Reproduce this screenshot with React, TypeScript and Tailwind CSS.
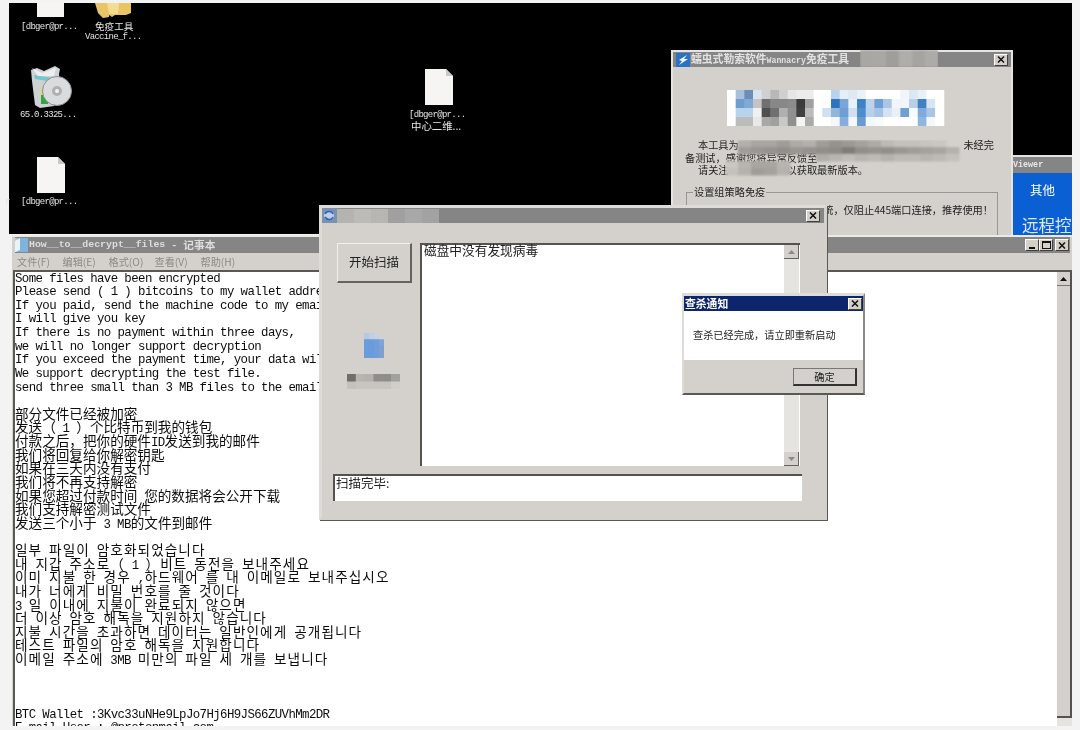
import React from "react";

const MONO = "font-['Liberation_Mono',monospace] text-[12.4px] tracking-[-0.6px]";
const SC = "font-['Noto_Sans_CJK_SC','Liberation_Sans',sans-serif] text-[13.6px]";
const KR = "font-['Noto_Sans_CJK_KR','Liberation_Sans',sans-serif] text-[13.6px] tracking-[1.1px]";

const LINES: { t: string; kr?: boolean }[] = [
  { t: "Some files have been encrypted" },
  { t: "Please send ( 1 ) bitcoins to my wallet address" },
  { t: "If you paid, send the machine code to my email" },
  { t: "I will give you key" },
  { t: "If there is no payment within three days," },
  { t: "we will no longer support decryption" },
  { t: "If you exceed the payment time, your data will be open to the public download" },
  { t: "We support decrypting the test file." },
  { t: "send three small than 3 MB files to the email address" },
  { t: "" },
  { t: "部分文件已经被加密" },
  { t: "发送（ 1 ）个比特币到我的钱包" },
  { t: "付款之后，把你的硬件ID发送到我的邮件" },
  { t: "我们将回复给你解密钥匙" },
  { t: "如果在三天内没有支付" },
  { t: "我们将不再支持解密" },
  { t: "如果您超过付款时间 您的数据将会公开下载" },
  { t: "我们支持解密测试文件" },
  { t: "发送三个小于 3 MB的文件到邮件" },
  { t: "" },
  { t: "일부 파일이 암호화되었습니다", kr: true },
  { t: "내 지갑 주소로（ 1 ）비트 동전을 보내주세요", kr: true },
  { t: "이미 지불 한 경우 ,하드웨어 를 내 이메일로 보내주십시오", kr: true },
  { t: "내가 너에게 비밀 번호를 줄 것이다", kr: true },
  { t: "3 일 이내에 지불이 완료되지 않으면", kr: true },
  { t: "더 이상 암호 해독을 지원하지 않습니다", kr: true },
  { t: "지불 시간을 초과하면 데이터는 일반인에게 공개됩니다", kr: true },
  { t: "테스트 파일의 암호 해독을 지원합니다", kr: true },
  { t: "이메일 주소에 3MB 미만의 파일 세 개를 보냅니다", kr: true },
  { t: "" },
  { t: "" },
  { t: "" },
  { t: "BTC Wallet :3Kvc33uNHe9LpJo7Hj6H9JS66ZUVhMm2DR" },
  { t: "E-mail User : @protonmail.com" },
];

function Line({ t, kr }: { t: string; kr?: boolean }) {
  const parts = t.split(/([\x00-\x7f]+)/).filter(Boolean);
  const cjk = /[^\x00-\x7f]/.test(t);
  return (
    <div className={`h-[13.625px] leading-[13.625px] whitespace-pre font-['Liberation_Mono',monospace] text-[11px] ${cjk ? "-translate-y-[2px]" : ""}`}>
      {parts.map((p, i) => (
        <span key={i} className={/^[\x00-\x7f]/.test(p) ? MONO : kr ? KR : SC}>
          {p}
        </span>
      ))}
    </div>
  );
}

function Mosaic({
  w,
  h,
  cw,
  ch,
  rows,
  blur = 0.7,
  id,
}: {
  w: number;
  h: number;
  cw: number;
  ch: number;
  rows: string[][];
  blur?: number;
  id: string;
}) {
  return (
    <svg width={w} height={h} className="block">
      <filter id={id} x="-10%" y="-10%" width="120%" height="120%">
        <feGaussianBlur stdDeviation={blur} />
      </filter>
      <g filter={`url(#${id})`}>
        {rows.map((r, y) =>
          r.map((c, x) =>
            c ? <rect key={`${x}-${y}`} x={x * cw} y={y * ch} width={cw + 0.5} height={ch + 0.5} fill={`#${c}`} /> : null
          )
        )}
      </g>
    </svg>
  );
}

function XBtn() {
  return (
    <div className="w-[14px] h-[12px] bg-[#d4d0c8] border-t border-l border-t-white border-l-white border-b border-r border-b-[#404040] border-r-[#404040] flex items-center justify-center">
      <svg width="8" height="7" viewBox="0 0 8 7">
        <path d="M1 0.5L7 6.5M7 0.5L1 6.5" stroke="#111" strokeWidth="1.5" />
      </svg>
    </div>
  );
}

function MinBtn() {
  return (
    <div className="w-[14px] h-[12px] bg-[#d4d0c8] border-t border-l border-t-white border-l-white border-b border-r border-b-[#404040] border-r-[#404040] flex items-end justify-center pb-[1px]">
      <div className="w-[6px] h-[2px] bg-[#111] mr-[1px]" />
    </div>
  );
}

function MaxBtn() {
  return (
    <div className="w-[14px] h-[12px] bg-[#d4d0c8] border-t border-l border-t-white border-l-white border-b border-r border-b-[#404040] border-r-[#404040] flex items-center justify-center">
      <div className="w-[9px] h-[8px] border border-t-2 border-[#111]" />
    </div>
  );
}

function DocIcon() {
  return (
    <svg width="28" height="36" viewBox="0 0 28 36">
      <path d="M0 0H21L28 7V36H0Z" fill="#f7f5f3" />
      <path d="M21 0L28 7H21Z" fill="#c8c8c8" />
    </svg>
  );
}

function DeskLabel({ children, className }: { children: React.ReactNode; className: string }) {
  return (
    <div className={`absolute text-[#e4e4e4] whitespace-pre leading-[10px] font-['Liberation_Mono','Noto_Sans_CJK_SC',monospace] text-[9px] tracking-[-0.7px] ${className}`}>
      {children}
    </div>
  );
}

const UI = "font-['Noto_Sans_CJK_SC','Liberation_Sans',sans-serif]";

export default function App() {
  return (
    <div className={`relative w-[1080px] h-[730px] overflow-hidden bg-[#f3f3f3] blur-[0.35px] ${UI}`}>
      {/* desktop */}
      <div className="absolute left-[9px] top-[3px] w-[1063px] h-[231px] bg-black overflow-hidden" />

      <div className="absolute left-[37px] top-[3px] w-[27px] h-[14px] bg-[#f7f5f3]" />
      <DeskLabel className="left-[21px] top-[22px]">[dbger@pr...</DeskLabel>

      <svg className="absolute left-[95px] top-[3px]" width="36" height="15" viewBox="0 0 36 15">
        <path d="M0 0H36V10L31 12H20L17 14L14 12V14L8 15L3 10Z" fill="#e9c568" />
        <path d="M12 0H24L23 11H14Z" fill="#f5dc93" />
      </svg>
      <div className="absolute left-[95px] top-[19px] text-[9.6px] leading-[14px] text-[#e8e8e8] whitespace-pre">免疫工具</div>
      <DeskLabel className="left-[85px] top-[32px]">Vaccine_f...</DeskLabel>

      <svg className="absolute left-[30px] top-[65px]" width="42" height="44" viewBox="0 0 42 44">
        <path d="M1 5L7 3L14 6L25 1L30 4L29 9L30 30L24 41L10 43L5 40L2 16Z" fill="#cfd2d5" />
        <path d="M4 10L29 14L29 18L5 14Z" fill="#6fc8d2" />
        <path d="M2 3L12 8L26 3L24 11L8 11Z" fill="#eeeeee" />
        <rect x="11" y="24" width="8" height="8" fill="#e5d84a" />
        <rect x="11" y="30" width="7" height="9" fill="#2ea83c" />
        <circle cx="27" cy="26" r="14.5" fill="#d9dbdc" />
        <circle cx="27" cy="26" r="14.5" fill="none" stroke="#8c8f92" strokeWidth="1" />
        <circle cx="27" cy="26" r="5" fill="#aeb1b3" />
        <circle cx="27" cy="26" r="2" fill="#f2f2f2" />
      </svg>
      <DeskLabel className="left-[20px] top-[110px]">65.0.3325...</DeskLabel>

      <div className="absolute left-[37px] top-[157px]"><DocIcon /></div>
      <DeskLabel className="left-[21px] top-[197px]">[dbger@pr...</DeskLabel>
      <DeskLabel className="left-[5px] top-[197px]">r</DeskLabel>

      <div className="absolute left-[425px] top-[69px]"><DocIcon /></div>
      <DeskLabel className="left-[409px] top-[110px]">[dbger@pr...</DeskLabel>
      <div className="absolute left-[411px] top-[119px] text-[10.4px] leading-[13px] text-[#e8e8e8] whitespace-pre">中心二维...</div>

      {/* Viewer window */}
      <div className="absolute left-[1012px] top-[155px] w-[60px] h-[80px] border-t-2 border-t-[#e4e2de] bg-[#0a5fd2] overflow-hidden">
        <div className="h-[16px] bg-[#858585] text-[#e8e8e8] font-bold font-['Liberation_Mono',monospace] text-[8.4px] leading-[16px] pl-[1px] whitespace-pre">Viewer</div>
        <div className="pt-[8px] pl-[18px] text-white text-[12.5px] leading-[18px]">其他</div>
        <div className="pt-[16px] pl-[10px] text-[#dbe8ff] text-[16.5px] leading-[20px] whitespace-pre">远程控制</div>
      </div>

      {/* Wannacry tool */}
      <div className="absolute left-[671px] top-[50px] w-[342px] h-[190px] bg-[#d4d1cc] border-[2px] border-[#e6e4e0]">
        <div className="h-[15px] bg-[#858585] flex items-center pl-[3px] pr-[3px]">
          <svg width="14" height="14" viewBox="0 0 14 14">
            <rect width="14" height="14" fill="#2a73c4" />
            <path d="M3 7L11 2L8 6L12 6L3 12L6 8Z" fill="#f2f6fb" />
          </svg>
          <span className="ml-[1px] text-[#e2e2e2] text-[10.8px] font-bold leading-[15px] whitespace-pre">
            蠕虫式勒索软件<span className="font-['Liberation_Mono',monospace] text-[8.2px]">Wannacry</span>免疫工具
          </span>
          <div className="ml-auto"><XBtn /></div>
        </div>
        <div className="mt-[23px] ml-[54px]">
          <Mosaic
            id="logo"
            w={222}
            h={36}
            cw={8.67}
            ch={9}
            blur={0.7}
            rows={[
              ["ffffff", "a9bfdc", "6d8db8", "d8e4ef", "d0d0d0", "b8b8b8", "d0d0d0", "e6e6e6", "ececec", "ececec", "ffffff", "ffffff", "b9d3ee", "e6eff8", "dfe9f4", "eaf1f8", "ffffff", "ffffff", "ffffff", "ffffff", "f2f6fb", "dce8f4", "e8f0f8", "ffffff", "ffffff"],
              ["ffffff", "6e9dd0", "7fa9d6", "c4c4c4", "707070", "888888", "888888", "8c8c8c", "3a3a3a", "a0a0a0", "ffffff", "ffffff", "2f73bd", "78a6d8", "e8f0f8", "3f80c4", "bcd3ea", "6f9fd6", "aac6e4", "f2f6fb", "f2f6fb", "b8cfe6", "4380c4", "d8e6f4", "ffffff"],
              ["ffffff", "b8d4ec", "b8d4ec", "f0f0f0", "505050", "707070", "b0b0b0", "909090", "404040", "bcbcbc", "ffffff", "d0e0f0", "90b6dc", "6d9fd4", "d0e0f2", "4f8cca", "b8d0ea", "a6c4e6", "d4e2f2", "e8f0f8", "6f9fd4", "f8fbfd", "80aadc", "a9c6e6", "ffffff"],
              ["ffffff", "bcbcbc", "bcbcbc", "e8e8e8", "a8a8a8", "a0a0a0", "c8c8c8", "909090", "f5f5f5", "aaaaaa", "ffffff", "ffffff", "f4f8fc", "86aedd", "f4f8fc", "6b9bd0", "f4f8fc", "f8fbfd", "ffffff", "ffffff", "ffffff", "ffffff", "90b6dc", "f4f8fc", "ffffff"],
            ]}
          />
        </div>
        <div className="relative mt-[13px] h-[44px] text-[10.2px] leading-[12.5px] text-[#222]">
          <div className="pl-[25px] whitespace-pre">本工具为</div>
          <div className="pl-[12px] whitespace-pre">备测试，感谢您将异常反馈至</div>
          <div className="pl-[25px] whitespace-pre">请关注<span className="pl-[58px]">以获取最新版本。</span></div>
          <div className="absolute right-[17px] top-0 whitespace-pre">未经完</div>
          <div className="absolute left-[52px] top-[1px]">
            <Mosaic
              id="band"
              w={240}
              h={40}
              cw={13}
              ch={7}
              blur={1.1}
              rows={[
                ["", "b3b0ab", "a9a6a1", "a9a6a1", "a09d98", "aeaba6", "b3b0ab", "a09d98", "96938e", "9c9994", "a5a29d", "aeaba6", "bdbab5", "c4c1bc", "c4c1bc", "c8c5c0", "cac7c2", "", ""],
                ["", "a09d98", "9a9792", "96938e", "928f8a", "9a9792", "96938e", "928f8a", "8e8b86", "807d78", "928f8a", "96938e", "928f8a", "9a9792", "a09d98", "a5a29d", "a9a6a1", "b5b2ad", ""],
                ["", "", "", "", "", "", "", "b0ada8", "b8b5b0", "c0bdb8", "b8b5b0", "bdbab5", "b5b2ad", "bdbab5", "bdbab5", "b8b5b0", "bdbab5", "c4c1bc", ""],
                ["cac7c2", "b8b5b0", "a9a6a1", "a9a6a1", "b8b5b0", "", "", "", "", "", "", "", "", "", "", "", "", "", ""],
                ["c4c1bc", "b5b2ad", "a09d98", "a5a29d", "b5b2ad", "", "", "", "", "", "", "", "", "", "", "", "", "", ""],
              ]}
            />
          </div>
        </div>
        <div className="relative mt-[9px] mx-[13px] h-[60px] border border-[#999691]">
          <div className="absolute left-[6px] top-[-8px] px-[1px] bg-[#d4d1cc] text-[10.2px] leading-[14px] text-[#222] whitespace-pre">设置组策略免疫</div>
          <div className="flex justify-end pt-[10px] pr-[4px] text-[10.2px] leading-[14px] text-[#222] whitespace-pre">不影响系统，仅阻止445端口连接，推荐使用！</div>
        </div>
      </div>

      {/* Notepad */}
      <div className="absolute left-[12px] top-[235px] w-[1060px] h-[491px] bg-[#d4d1cc] border-t-2 border-t-[#eceae6] flex flex-col">
        <div className="h-[16px] ml-[3px] mr-[2px] bg-[#858585] flex items-center">
          <svg width="13" height="14" viewBox="0 0 13 14">
            <rect width="13" height="14" fill="#a8cbe8" />
            <path d="M2 0H13V14H2Z" fill="#7fb4de" />
            <path d="M0 3L5 0V12L0 14Z" fill="#e9f3fa" />
          </svg>
          <span className="text-[#dedede] font-bold font-['Liberation_Mono',monospace] text-[9.9px] leading-[16px] whitespace-pre ml-[1px]">How__to__decrypt__files</span>
          <span className="text-[#dedede] font-bold text-[10.7px] leading-[16px] ml-[7px]">-</span>
          <span className="text-[#dedede] font-bold text-[10.7px] leading-[16px] ml-[7px] whitespace-pre">记事本</span>
          <div className="ml-auto flex pr-[1px]">
            <MinBtn />
            <MaxBtn />
            <div className="ml-[2px]"><XBtn /></div>
          </div>
        </div>
        <div className="h-[17px] pl-[5px] flex items-center text-[#8c8984] text-[10.2px] leading-[17px] whitespace-pre">
          <span className="w-[45.5px]">文件(F)</span>
          <span className="w-[46px]">编辑(E)</span>
          <span className="w-[46px]">格式(O)</span>
          <span className="w-[46px]">查看(V)</span>
          <span>帮助(H)</span>
        </div>
        <div className="flex-1 min-h-0 ml-[1px] flex border-t-2 border-l-2 border-t-[#5a5855] border-l-[#5a5855] bg-white overflow-hidden">
          <div className="flex-1 pl-[0px] pt-[0.5px] text-[#0c0c0c] overflow-hidden">
            {LINES.map((l, i) => (
              <Line key={i} t={l.t} kr={l.kr} />
            ))}
          </div>
          <div className="w-[15px] flex flex-col">
            <div className="h-[446px] bg-[#d4d1cc] border-r-2 border-b-2 border-r-[#55524f] border-b-[#55524f]">
              <div className="h-[14px] border-b border-b-[#777] flex items-center justify-center">
                <svg width="7" height="4" viewBox="0 0 7 4"><path d="M3.5 0L7 4H0Z" fill="#111" /></svg>
              </div>
            </div>
            <div className="flex-1 bg-[#e6e4e1]" />
          </div>
        </div>
      </div>

      {/* Scan window */}
      <div className="absolute left-[319px] top-[205px] w-[508px] h-[315px] bg-[#d4d1cc] border-[3px] border-t-[#dedcd8] border-l-[#dedcd8] border-r-[#d4d1cc] border-b-[#d4d1cc] shadow-[1px_1px_0_#5a5855]">
        <div className="h-[15px] bg-[#858585] flex items-center pr-[3px]">
          <svg width="15" height="15" viewBox="0 0 15 15">
            <rect width="15" height="15" fill="#7d90ad" />
            <circle cx="7" cy="7.5" r="5" fill="#bcd0ee" />
            <path d="M3 6C5 2 10 3 11 6M11 9C9 13 5 12 3 9" stroke="#2e62b8" strokeWidth="1.6" fill="none" />
          </svg>
          <Mosaic
            id="title1"
            w={102}
            h={14}
            cw={17}
            ch={14}
            blur={0.6}
            rows={[["b5b3b0", "bdbbb8", "b8b6b3", "a0a0a0", "a8a8a8", "a2a2a2"]]}
          />
          <div className="ml-auto mr-[1px]"><XBtn /></div>
        </div>
        <div className="flex pt-[20px] pl-[15px] gap-[8px]">
          <div className="w-[75px]">
            <div className="h-[40px] bg-[#d4d1cc] border border-t-[#f2f0ec] border-l-[#f2f0ec] border-r-[#66635f] border-b-[#66635f] border-b-2 border-r-2 flex items-center justify-center text-[12.5px] text-[#222] whitespace-pre">开始扫描</div>
            <div className="mt-[50px] ml-[27px]">
              <Mosaic
                id="ico"
                w={20}
                h={25}
                cw={5}
                ch={6.25}
                blur={0.7}
                rows={[
                  ["b8c8de", "c0cfe2", "c6d2e2", "", ""],
                  ["6b9bdc", "6b9bdc", "6f9ddc", "7fa5d8", ""],
                  ["6b9bdc", "6b9bdc", "6f9ddc", "7f9fd0", ""],
                  ["6b9bdc", "6b9bdc", "6f9ddc", "7f9fd0", ""],
                ]}
              />
            </div>
            <div className="mt-[16px] ml-[10px]">
              <Mosaic
                id="lbl"
                w={53}
                h={15}
                cw={8.8}
                ch={7.5}
                blur={0.6}
                rows={[
                  ["706d6a", "b8b5b0", "b5b2ad", "908e8b", "8f8d8a", "a3a19e"],
                  ["c4c1bc", "c8c5c0", "c8c5c0", "c8c5c0", "c8c5c0", "d0cdc8"],
                ]}
              />
            </div>
          </div>
          <div className="w-[380px] h-[223px] bg-white border-t-2 border-l-2 border-t-[#55524f] border-l-[#55524f] flex">
            <div className="flex-1 pl-[2px] text-[12.7px] leading-[10px] text-[#222] whitespace-pre">磁盘中没有发现病毒</div>
            <div className="w-[15px] bg-[#e6e4e1] flex flex-col justify-between mr-[1px]">
              <div className="h-[14px] bg-[#d4d1cc] border-r border-b border-r-[#66635f] border-b-[#66635f] flex items-center justify-center">
                <svg width="7" height="4" viewBox="0 0 7 4"><path d="M3.5 0L7 4H0Z" fill="#8a8a8a" /></svg>
              </div>
              <div className="h-[14px] bg-[#d4d1cc] border-r border-b border-r-[#66635f] border-b-[#66635f] flex items-center justify-center">
                <svg width="7" height="4" viewBox="0 0 7 4"><path d="M3.5 4L7 0H0Z" fill="#8a8a8a" /></svg>
              </div>
            </div>
          </div>
        </div>
        <div className="ml-[11px] mt-[8px] w-[469px] h-[27px] bg-white border-t-2 border-l-2 border-t-[#55524f] border-l-[#55524f] pl-[1px] text-[12.5px] leading-[13px] text-[#222] whitespace-pre">扫描完毕:</div>
      </div>

      {/* Wannacry title mosaic (sticks above the titlebar) */}
      <div className="absolute left-[860px] top-[50px]">
        <Mosaic
          id="title2"
          w={78}
          h={17}
          cw={13}
          ch={17}
          blur={1}
          rows={[["a9a7a4", "aaa8a5", "a09e9b", "b0aeab", "a6a4a1", "adaba8"]]}
        />
      </div>

      {/* Alert */}
      <div className="absolute left-[682px] top-[293px] w-[183px] h-[102px] bg-[#d4d1cc] border-t-[3px] border-l-2 border-r-2 border-b-2 border-t-[#dedcd8] border-l-[#dedcd8] border-r-[#8a8884] border-b-[#5a5855]">
        <div className="h-[15px] bg-[#0c256d] flex items-center pl-[1px] pr-[1px]">
          <span className="text-white font-bold text-[10.8px] leading-[15px] whitespace-pre">查杀通知</span>
          <div className="ml-auto"><XBtn /></div>
        </div>
        <div className="h-[49px] bg-white pl-[9px] pt-[17px] text-[10.2px] leading-[14px] text-[#222] whitespace-pre">查杀已经完成，请立即重新启动</div>
        <div className="flex justify-end pr-[6px] pt-[8px]">
          <div className="w-[64px] h-[18px] border border-t-[#777] border-l-[#777] border-r-[#333] border-b-[#333] border-b-2 border-r-2 flex items-center justify-center text-[10.2px] text-[#222] whitespace-pre">确定</div>
        </div>
      </div>
    </div>
  );
}
